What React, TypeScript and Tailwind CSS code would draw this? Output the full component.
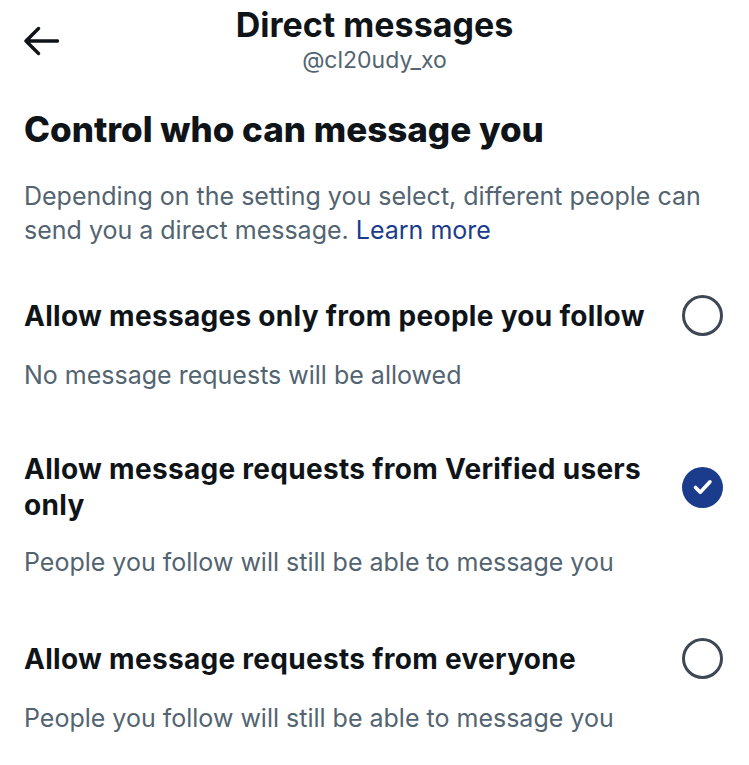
import React from 'react';

// ── Data ──────────────────────────────────────────────────────────────────────

const OPTIONS = [
  {
    id: 'following',
    title: 'Allow messages only from people you follow',
    note: 'No message requests will be allowed',
    checked: false,
  },
  {
    id: 'verified',
    title: 'Allow message requests from Verified users only',
    note: 'People you follow will still be able to message you',
    checked: true,
  },
  {
    id: 'everyone',
    title: 'Allow message requests from everyone',
    note: 'People you follow will still be able to message you',
    checked: false,
  },
];

// ── Pieces ────────────────────────────────────────────────────────────────────

function BackArrow() {
  return (
    <svg width="36" height="30" viewBox="0 0 36 30" fill="none" className="text-[#0f1419]">
      <path
        d="M34.5 15H3.5M15.5 2.5L3 15l12.5 12.5"
        stroke="currentColor"
        strokeWidth="3.4"
        strokeLinecap="round"
        strokeLinejoin="round"
      />
    </svg>
  );
}

function Radio({ checked }: { checked: boolean }) {
  if (checked) {
    return (
      <span className="flex h-[41px] w-[41px] shrink-0 items-center justify-center rounded-full bg-[#1b3c8c]">
        <svg width="22" height="22" viewBox="0 0 22 22" fill="none" className="-mt-px">
          <path
            d="M3.5 11.5l4.8 4.8L18 5.8"
            stroke="white"
            strokeWidth="3.6"
            strokeLinecap="round"
            strokeLinejoin="round"
          />
        </svg>
      </span>
    );
  }
  return <span className="block h-[41px] w-[41px] shrink-0 rounded-full border-[3px] border-[#3d4854]" />;
}

// ── App ───────────────────────────────────────────────────────────────────────

export default function App() {
  return (
    <div className="min-h-[765px] w-[749px] bg-white font-['Inter',sans-serif] text-[#0f1419]">
      {/* Header */}
      <div className="grid grid-cols-[1fr_auto_1fr] px-6 pt-[5px]">
        <div className="pt-[21px] -ml-px">
          <BackArrow />
        </div>
        <div className="flex flex-col items-center">
          <h1 className="text-[34px] font-bold leading-[40px]">Direct messages</h1>
          <div className="text-[23px] leading-[30px] text-[#536471]">@cl20udy_xo</div>
        </div>
        <div />
      </div>

      <div className="px-6">
        <h2 className="mt-[33px] text-[35px] font-extrabold leading-[42px]">Control who can message you</h2>
        <p className="mt-[29px] text-[25px] leading-[34px] text-[#536471]">
          Depending on the setting you select, different people can send you a direct message.{' '}
          <span className="text-[#1b3c8c]">Learn more</span>
        </p>

        <div className="mt-[48px] flex flex-col gap-[61px]">
          {OPTIONS.map((opt) => (
            <div key={opt.id}>
              <div className="flex min-h-[41px] items-center gap-6">
                <div className="flex-1 text-[28px] font-bold leading-[36px] tracking-[0.3px]">{opt.title}</div>
                <div className="mr-[2px]">
                  <Radio checked={opt.checked} />
                </div>
              </div>
              <div className="mt-[24px] text-[25px] leading-[30px] text-[#536471]">{opt.note}</div>
            </div>
          ))}
        </div>
      </div>
    </div>
  );
}
